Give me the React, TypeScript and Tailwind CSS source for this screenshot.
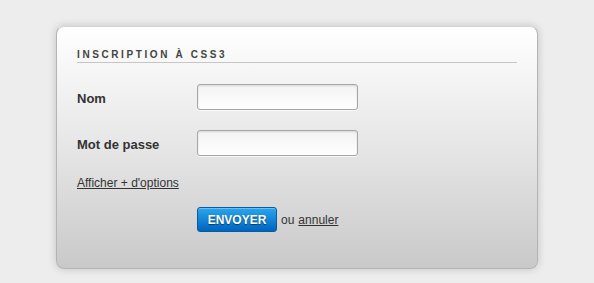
import React from "react";

export default function App() {
  return (
    <div className="h-[283px] w-[594px] bg-[#ededed] pt-[26px] pl-[56px] font-['Liberation_Sans',Arial,sans-serif]">
      <div className="w-[482px] h-[243px] rounded-[8px] border border-[#b4b4b4] border-t-[#d4d4d4] bg-gradient-to-b from-white via-[#e6e6e6] to-[#c9c9c9] shadow-[0_0_8px_rgba(0,0,0,0.18)] px-[20px] pt-[21px]">
        <h1 className="text-[10px] leading-[13px] font-bold tracking-[2.6px] text-[#444] border-b border-[#c6c6c6] pb-[1px]">
          INSCRIPTION À CSS3
        </h1>
        <div className="mt-[21px] flex items-center">
          <label className="w-[120px] text-[13px] font-bold text-[#333] pt-[3px]">Nom</label>
          <input
            type="text"
            className="w-[161px] h-[26px] rounded-[3px] border border-[#a6a6a6] bg-gradient-to-b from-[#f3f3f3] to-white shadow-[inset_0_1px_2px_rgba(0,0,0,0.12),0_1px_0_rgba(255,255,255,0.7)] outline-none"
          />
        </div>
        <div className="mt-[20px] flex items-center">
          <label className="w-[120px] text-[13px] font-bold text-[#333] pt-[3px]">Mot de passe</label>
          <input
            type="password"
            className="w-[161px] h-[26px] rounded-[3px] border border-[#a6a6a6] bg-gradient-to-b from-[#f3f3f3] to-white shadow-[inset_0_1px_2px_rgba(0,0,0,0.12),0_1px_0_rgba(255,255,255,0.7)] outline-none"
          />
        </div>
        <div className="mt-[20px] text-[12px] leading-[14px] text-[#333]">
          <a href="#" className="underline">Afficher + d'options</a>
        </div>
        <div className="mt-[17px] ml-[120px] flex items-center text-[12px] text-[#333]">
          <button className="w-[80px] h-[25px] rounded-[3px] border border-[#0b5a9c] bg-gradient-to-b from-[#2aa6ee] to-[#0064c0] text-white text-[12px] font-bold [text-shadow:0_1px_1px_rgba(0,0,0,0.5)] shadow-[inset_0_1px_0_rgba(255,255,255,0.3)]">
            ENVOYER
          </button>
          <span className="ml-[4px]">ou </span>
          <a href="#" className="underline ml-[4px]">annuler</a>
        </div>
      </div>
    </div>
  );
}
